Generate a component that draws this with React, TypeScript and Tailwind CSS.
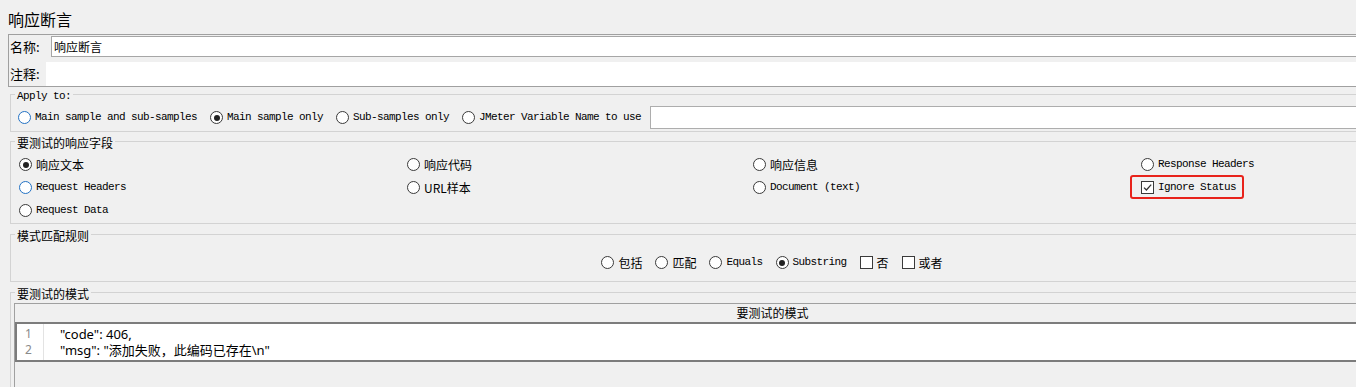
import clsx from 'clsx';

const mono = "font-['Liberation_Mono',monospace] text-[11px] tracking-[-0.6px]";
const cjk = "font-['Noto_Sans_CJK_SC',sans-serif] text-[12px]";

const Radio = ({ checked = false, focus = false }: { checked?: boolean; focus?: boolean }) => (
  <span
    className={clsx(
      'flex h-[13px] w-[13px] shrink-0 items-center justify-center rounded-full border bg-white',
      focus ? 'border-[#2372c4]' : 'border-[#3a3a3a]',
    )}>
    {checked && <span className="h-[6px] w-[6px] rounded-full bg-[#222]" />}
  </span>
);

const Check = ({ checked = false }: { checked?: boolean }) => (
  <span className="flex h-[13px] w-[13px] shrink-0 items-center justify-center border border-[#3a3a3a] bg-white">
    {checked && (
      <svg viewBox="0 0 11 11" className="h-[11px] w-[11px]">
        <path d="M2 5.6 L4.4 8 L9.2 2.6" stroke="#333" strokeWidth="1.3" fill="none" />
      </svg>
    )}
  </span>
);

type Opt = { label: string; en?: boolean; checked?: boolean; focus?: boolean; box?: boolean };

const Option = ({ label, en, checked, focus, box }: Opt) => (
  <span className="inline-flex items-center gap-[4px] whitespace-pre">
    {box ? <Check checked={checked} /> : <Radio checked={checked} focus={focus} />}
    <span className={en ? mono : cjk}>{label}</span>
  </span>
);

const Group = ({ title, en, className, children }: { title: string; en?: boolean; className?: string; children: React.ReactNode }) => (
  <fieldset className={clsx('mx-[10px] border border-[#d3d3d3] px-0', className)}>
    <legend className={clsx('ml-[4px] block px-[2px] leading-[14px]', en ? mono : cjk)}>
      <span className="relative top-[2px]">{title}</span>
    </legend>
    {children}
  </fieldset>
);

const fields: (Opt | null)[] = [
  { label: '响应文本', checked: true },
  { label: '响应代码' },
  { label: '响应信息' },
  { label: 'Response Headers', en: true },
  { label: 'Request Headers', en: true, focus: true },
  { label: 'URL样本' },
  { label: 'Document (text)', en: true },
  { label: 'Ignore Status', en: true, box: true, checked: true },
  { label: 'Request Data', en: true },
];

export default function App() {
  return (
    <div className="h-[387px] w-[1356px] overflow-hidden bg-[#f0f0f0] text-black">
      <div className="w-[1544px]">
        <div className="h-[34px] pl-[8px] pt-[5px] font-['Noto_Sans_CJK_SC',sans-serif] text-[16px] leading-[28px]">
          响应断言
        </div>

        <div className="mx-[8px] border border-[#a0a0a0] pt-[1px]">
          <div className="flex h-[21px] items-center">
            <span className="w-[42px] pl-[1px] font-['Noto_Sans_CJK_SC',sans-serif] text-[13px]">名称:</span>
            <div className="h-[21px] flex-1 border border-[#a6a6a6] bg-white pl-[2px] font-['Noto_Sans_CJK_SC',sans-serif] text-[12px] leading-[19px]">
              响应断言
            </div>
          </div>
          <div className="mt-[5px] flex h-[24px] items-center">
            <span className="w-[37px] pl-[1px] font-['Noto_Sans_CJK_SC',sans-serif] text-[13px]">注释:</span>
            <div className="h-[24px] flex-1 bg-white" />
          </div>
        </div>

        <Group title="Apply to:" en>
          <div className="mb-[2px] mt-[5px] flex h-[23px] items-center pl-[7px]">
            <div className="flex items-center gap-[13px]">
              <Option label="Main sample and sub-samples" en focus />
              <Option label="Main sample only" en checked />
              <Option label="Sub-samples only" en />
              <Option label="JMeter Variable Name to use" en />
            </div>
            <div className="ml-[9px] h-[23px] flex-1 border border-[#adadad] bg-white" />
          </div>
        </Group>

        <Group title="要测试的响应字段" className="mt-[2px]">
          <div className="grid grid-cols-[388px_346px_388px_1fr] pb-[1px] pl-[8px] pt-[5px]">
            {fields.map((f, i) => (
              <div key={i} className="flex h-[23px] items-center">
                {f && (
                  <span className="relative inline-flex">
                    <Option {...f} />
                    {f.label === 'Ignore Status' && (
                      <span className="absolute -left-[11px] -right-[8px] -top-[4px] h-[24px] rounded-[3px] border-2 border-[#e8231b]" />
                    )}
                  </span>
                )}
              </div>
            ))}
          </div>
        </Group>

        <Group title="模式匹配规则" className="mt-[3px]">
          <div className="mb-[7px] mt-[10px] flex h-[23px] items-center justify-center gap-[13px]">
            <Option label="包括" />
            <Option label="匹配" />
            <Option label="Equals" en />
            <Option label="Substring" en checked />
            <Option label="否" box />
            <Option label="或者" box />
          </div>
        </Group>

        <Group title="要测试的模式" className="mt-[3px]">
          <div className="mx-[3px] mt-[4px] border-l border-t border-[#a0a0a0]">
            <div className={clsx('h-[18px] text-center leading-[18px]', cjk)}>要测试的模式</div>
            <div className="flex border-y-2 border-l-2 border-[#7c7c7c] bg-white">
              <div className="w-[27px] border-r border-[#e3e3e3] py-[2px] pl-[8px] font-['Noto_Sans',sans-serif] text-[12px] leading-[16px] text-[#8a8a8a]">
                <div>1</div>
                <div>2</div>
              </div>
              <div className="py-[2px] pl-[16px] font-['Noto_Sans','Noto_Sans_CJK_SC',sans-serif] text-[13px] leading-[16px]">
                <div>"code": 406,</div>
                <div>"msg": "添加失败，此编码已存在\n"</div>
              </div>
            </div>
            <div className="h-[40px]" />
          </div>
        </Group>
      </div>
    </div>
  );
}
